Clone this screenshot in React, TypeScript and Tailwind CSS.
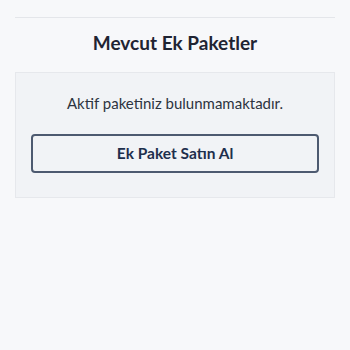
export default function App() {
  return (
    <div className="min-h-[350px] w-[350px] bg-[#f7f8fa] px-[15px] pt-[17px]" style={{ fontFamily: "Lato, 'Noto Sans', sans-serif" }}>
      <div className="border-t border-[#e4e6ea]" />
      <h2 className="mt-[13px] text-center text-[19px] font-bold leading-[24px] text-[#1f2433]">Mevcut Ek Paketler</h2>
      <div className="mt-[17px] border border-[#e6e8ec] bg-[#f1f3f6] px-[15px] pb-[24px] pt-[18px]">
        <p className="text-center text-[15px] leading-[24px] text-[#2d3340]">Aktif paketiniz bulunmamaktadır.</p>
        <button className="mt-[19px] flex h-[39px] w-full items-center justify-center rounded-[4px] border-2 border-[#4d5a70] text-[15.5px] font-bold text-[#1e2f4d]">
          Ek Paket Satın Al
        </button>
      </div>
    </div>
  );
}
